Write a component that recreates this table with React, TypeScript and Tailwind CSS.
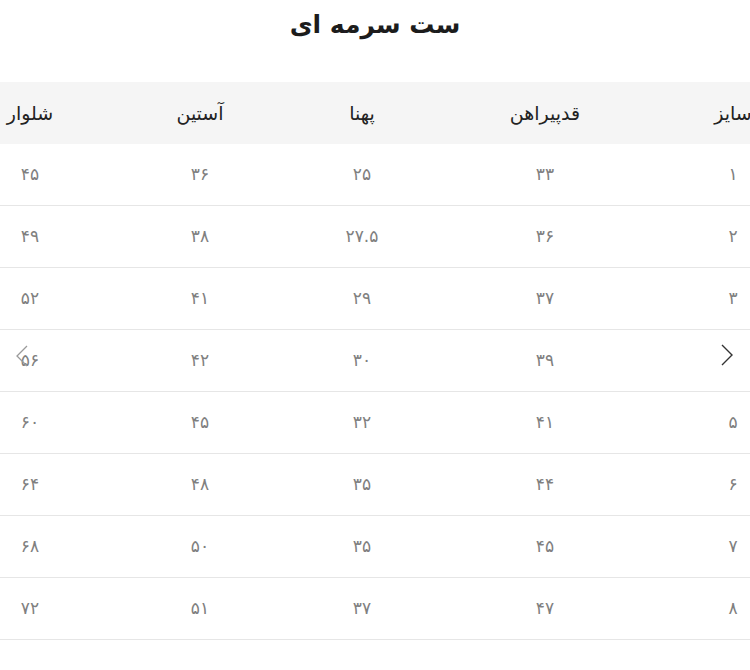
import React from "react";

const headers = ["سایز", "قدپیراهن", "پهنا", "آستین", "شلوار"];

const rows = [
  ["۱", "۳۳", "۲۵", "۳۶", "۴۵"],
  ["۲", "۳۶", "۲۷.۵", "۳۸", "۴۹"],
  ["۳", "۳۷", "۲۹", "۴۱", "۵۲"],
  ["۴", "۳۹", "۳۰", "۴۲", "۵۶"],
  ["۵", "۴۱", "۳۲", "۴۵", "۶۰"],
  ["۶", "۴۴", "۳۵", "۴۸", "۶۴"],
  ["۷", "۴۵", "۳۵", "۵۰", "۶۸"],
  ["۸", "۴۷", "۳۷", "۵۱", "۷۲"],
];

const cols = "grid grid-cols-[174px_202px_164px_160px_180px]";

export default function App() {
  return (
    <main className="w-[750px] h-[670px] bg-white font-['DejaVu_Sans',sans-serif] overflow-hidden">
      <h1
        dir="rtl"
        className="h-[46px] pt-[6px] text-center text-[25px] font-bold text-[#1c1c1c]"
      >
        ست سرمه ای
      </h1>

      <section className="relative mt-[36px] overflow-hidden">
        <div dir="rtl" className="w-[880px] -ml-[60px]">
          <div className={`${cols} h-[62px] items-center bg-[#f5f5f5]`}>
            {headers.map((h) => (
              <div key={h} className="text-center text-[19px] text-[#222]">
                {h}
              </div>
            ))}
          </div>
          {rows.map((r, i) => (
            <div
              key={i}
              className={`${cols} h-[62px] items-center border-b border-[#e6e6e6]`}
            >
              {r.map((v, j) => (
                <div key={j} className="text-center text-[17px] text-[#808080]">
                  {v}
                </div>
              ))}
            </div>
          ))}
        </div>

        {/* scroll arrows */}
        <button className="absolute left-[10px] top-[259px] w-[24px] h-[30px] flex items-center justify-center">
          <svg width="14" height="24" viewBox="0 0 14 24" fill="none">
            <path d="M12 2 L2 12 L12 22" stroke="#9a9a9a" strokeWidth="1.3" />
          </svg>
        </button>
        <button className="absolute right-[10px] top-[256px] w-[26px] h-[34px] bg-white flex items-center justify-center">
          <svg width="14" height="24" viewBox="0 0 14 24" fill="none">
            <path d="M2 2 L12 12 L2 22" stroke="#333" strokeWidth="1.4" />
          </svg>
        </button>
      </section>
    </main>
  );
}
